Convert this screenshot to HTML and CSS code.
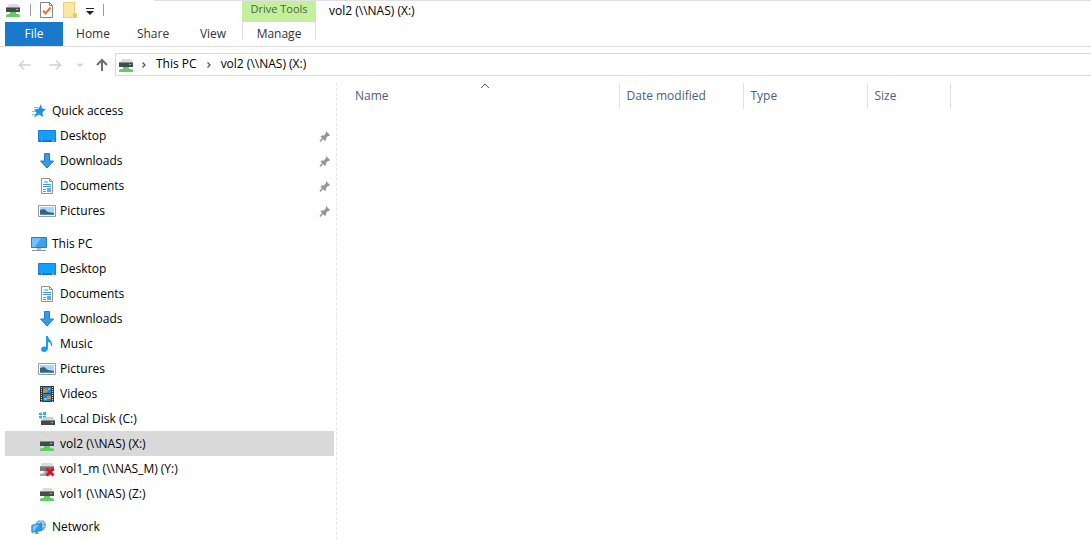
FILE: index.html
```html
<!DOCTYPE html>
<html lang="en">
<head>
  <meta charset="UTF-8">
  <title>vol2 (\\NAS) (X:)</title>
  <link rel="stylesheet" href="styles.css">
</head>
<body>
<svg class="sprite" aria-hidden="true">
  <symbol id="netdrive" viewBox="0 0 16 16">
    <path d="M4 2h9l2 4H2z" fill="#dcdcdc"/>
    <path d="M1 5h14v5H1z" fill="#454a4c"/>
    <path d="M1 5h14v1H1z" fill="#8c8f91"/>
    <path d="M11 7h2v1h-2z" fill="#5fe07a"/>
    <path d="M5 10h6v2h2l2 1v2H1v-2l2-1h2z" fill="#62cc67"/>
  </symbol>
  <symbol id="baddrive" viewBox="0 0 16 16">
    <path d="M3 2h10l2 4H1z" fill="#dcdcdc"/>
    <path d="M1 5h14v5H1z" fill="#737779"/>
    <path d="M1 5h14v1H1z" fill="#9a9c9e"/>
    <path d="M5 10h4v2h2v3H1v-2l4-1z" fill="#a9a9a9"/>
    <path d="M7.500 7.500l7 7M14.500 7.500l-7 7" stroke="#d9141e" stroke-width="3"/>
  </symbol>
  <symbol id="disk" viewBox="0 0 16 16">
    <path d="M0 2l3-.5V4H0zM4 1.300l3-.5V4H4zM0 5h3v2.500L0 7zM4 5h3v3l-3-.5z" fill="#1fb0f5"/>
    <path d="M5 6h9l2 4H2z" fill="#d2d2d2"/>
    <path d="M2 9h14v5H2z" fill="#44484a"/>
    <path d="M2 9h14v1H2z" fill="#8c8f91"/>
    <path d="M12 11h2v1h-2z" fill="#5fe07a"/>
  </symbol>
  <symbol id="star" viewBox="0 0 16 16">
    <path d="M10 1l1 4.500L15 6l-3.500 3.200L12 14l-4-2.500L3 14.500 5.500 9.500 3 6.500l4.500-.7z" fill="#1e92e6"/>
    <path d="M3 4.500h4M1 8.500h4M1 11.500h3" stroke="#72bff3"/>
  </symbol>
  <symbol id="desktop" viewBox="0 0 18 14">
    <path d="M.5 1.500h17v11H.5z" fill="#14a0fa" stroke="#1b7fd0"/>
    <path d="M1 12h16" stroke="#1560a8"/>
    <path d="M3 12h1M14 12h2" stroke="#b9e2ff"/>
  </symbol>
  <symbol id="download" viewBox="0 0 16 16">
    <path d="M5.500.5h5V8h4L8 15 1.500 8h4z" fill="#339bea" stroke="#1f7ccb"/>
  </symbol>
  <symbol id="document" viewBox="0 0 14 16">
    <path d="M1.500.5h8l3 3v12h-11z" fill="#fafafa" stroke="#8f9294"/>
    <path d="M9.500.5v3h3" fill="none" stroke="#8f9294"/>
    <path d="M4 4h4M3 6.500h8M3 8.500h8" stroke="#3a9de0"/>
    <path d="M3 11.500h3M3 13.500h3" stroke="#8f9294"/>
    <path d="M7 10h4v4H7z" fill="#6fa9cf"/>
  </symbol>
  <symbol id="picture" viewBox="0 0 18 14">
    <path d="M.5 1.500h17v11H.5z" fill="#fff" stroke="#999c9f"/>
    <path d="M2 3h14v8H2z" fill="#a7d8f5"/>
    <path d="M2 6l4-1 4 3 6 1v2H2z" fill="#35617e"/>
    <path d="M2 10h14v1H2z" fill="#4f93bf"/>
  </symbol>
  <symbol id="computer" viewBox="0 0 18 16">
    <path d="M1.500 1.500h15v10h-15z" fill="#3ba1ec" stroke="#2b7ebd"/>
    <path d="M2 2h9L5 11H2z" fill="#73c2f7"/>
    <path d="M7 12h4v2H7z" fill="#b7bcc0"/>
    <path d="M2 14.500h14" stroke="#8d959b"/>
  </symbol>
  <symbol id="music" viewBox="0 0 16 16">
    <path d="M7 0h2c0 4 5 4 4 10h-1c0-3-1-4-3-4v6c0 5-7 5-7 1.500C2 11 5 10 7 11z" fill="#189cf2"/>
  </symbol>
  <symbol id="video" viewBox="0 0 16 16">
    <path d="M1 0h14v16H1z" fill="#34383b"/>
    <path d="M2.500 1v15M13.500 1v15" stroke="#d6d6d6" stroke-dasharray="1 1"/>
    <path d="M4 1h8v6H4zM4 8h8v7H4z" fill="#2c84c8"/>
    <path d="M4 4l3-2 2 3-2 2H4zM8 10h4v3H8z" fill="#c79245"/>
    <path d="M9 2h2v2H9zM5 12h3v2H5z" fill="#65c5ee"/>
  </symbol>
  <symbol id="network" viewBox="0 0 18 18">
    <circle cx="11" cy="7" r="6" fill="#5fa8dc"/>
    <path d="M7 4q4 2 9 0M6 8h11M11 1q-4 6 0 12M11 1q5 6 0 12" fill="none" stroke="#c5e5f8"/>
    <path d="M1 7l11-2v8L1 15z" fill="#269ff0" stroke="#2579b6"/>
    <path d="M2 7.500l7-1.500-6 8H2z" fill="#79c8fb"/>
    <path d="M5 15l3-1v2l2 1H4z" fill="#8b959c"/>
  </symbol>
  <symbol id="pin" viewBox="0 0 12 12">
    <path d="M7 1l4 4-1 1H9L7 8v2L6 11 1.500 6.500l1-1H5L7 3z" fill="#90979d"/>
    <path d="M4.500 7.500L1 11.500" stroke="#90979d" stroke-width="1.500"/>
  </symbol>
  <symbol id="chevron" viewBox="0 0 8 8">
    <path d="M2.500 1.500L5 4 2.500 6.500" fill="none" stroke="#555" stroke-width="1.300"/>
  </symbol>
</svg>

<header>
  <div class="titlebar">
    <div class="quickbar">
      <svg class="icon"><use href="#netdrive"/></svg>
      <span class="bar"></span>
      <button type="button" aria-label="Properties">
        <svg width="14" height="16" viewBox="0 0 14 16"><path d="M.5.5h9l3 3v12H.5z" fill="#fff" stroke="#858585"/><path d="M9.500.5v3h3" fill="none" stroke="#858585"/><path d="M3 8.500l2.500 3 5-6" fill="none" stroke="#ee7124" stroke-width="2"/></svg>
      </button>
      <button type="button" aria-label="New folder">
        <svg width="14" height="16" viewBox="0 0 14 16"><path d="M0 0h12v11h1v5H0z" fill="#f3cf78"/><path d="M1 1h10v14H1z" fill="#fbe6a2"/><path d="M10 11h4v5h-4z" fill="#f3c57a"/></svg>
      </button>
      <button type="button" class="more" aria-label="Customize">
        <svg width="8" height="8" viewBox="0 0 8 8"><path d="M0 1.500h8" stroke="#222"/><path d="M0 4h8L4 8z" fill="#222"/></svg>
      </button>
      <span class="bar"></span>
    </div>
    <div class="tool-title">Drive Tools</div>
    <div class="title">vol2 (\\NAS) (X:)</div>
  </div>
  <nav class="tabs">
    <a href="#" class="file">File</a>
    <a href="#">Home</a>
    <a href="#">Share</a>
    <a href="#">View</a>
    <a href="#" class="manage">Manage</a>
  </nav>
  <div class="address-row">
    <div class="history">
      <button type="button" aria-label="Back"><svg width="14" height="12" viewBox="0 0 14 12"><path d="M13 6H1.500M6 1.500L1.500 6 6 10.500" fill="none" stroke="#d2d2d2" stroke-width="1.500"/></svg></button>
      <button type="button" aria-label="Forward"><svg width="14" height="12" viewBox="0 0 14 12"><path d="M1 6h11.500M8 1.500L12.500 6 8 10.500" fill="none" stroke="#d2d2d2" stroke-width="1.500"/></svg></button>
      <button type="button" class="recent" aria-label="Recent locations"><svg width="8" height="6" viewBox="0 0 8 6"><path d="M1.500 1.500L4 4l2.500-2.500" fill="none" stroke="#c8c8c8" stroke-width="1.300"/></svg></button>
      <button type="button" aria-label="Up"><svg width="12" height="14" viewBox="0 0 12 14"><path d="M6 13V2M1 7l5-5 5 5" fill="none" stroke="#6e6e6e" stroke-width="2"/></svg></button>
    </div>
    <div class="address">
      <svg class="icon"><use href="#netdrive"/></svg>
      <svg class="sep"><use href="#chevron"/></svg>
      <a href="#">This PC</a>
      <svg class="sep"><use href="#chevron"/></svg>
      <a href="#">vol2 (\\NAS) (X:)</a>
    </div>
  </div>
</header>

<main>
  <aside>
    <ul class="tree">
      <li>
        <a href="#"><svg class="icon"><use href="#star"/></svg>Quick access</a>
        <ul>
          <li><a href="#"><svg class="icon"><use href="#desktop"/></svg>Desktop<svg class="pin"><use href="#pin"/></svg></a></li>
          <li><a href="#"><svg class="icon"><use href="#download"/></svg>Downloads<svg class="pin"><use href="#pin"/></svg></a></li>
          <li><a href="#"><svg class="icon"><use href="#document"/></svg>Documents<svg class="pin"><use href="#pin"/></svg></a></li>
          <li><a href="#"><svg class="icon"><use href="#picture"/></svg>Pictures<svg class="pin"><use href="#pin"/></svg></a></li>
        </ul>
      </li>
      <li>
        <a href="#"><svg class="icon"><use href="#computer"/></svg>This PC</a>
        <ul>
          <li><a href="#"><svg class="icon"><use href="#desktop"/></svg>Desktop</a></li>
          <li><a href="#"><svg class="icon"><use href="#document"/></svg>Documents</a></li>
          <li><a href="#"><svg class="icon"><use href="#download"/></svg>Downloads</a></li>
          <li><a href="#"><svg class="icon"><use href="#music"/></svg>Music</a></li>
          <li><a href="#"><svg class="icon"><use href="#picture"/></svg>Pictures</a></li>
          <li><a href="#"><svg class="icon"><use href="#video"/></svg>Videos</a></li>
          <li><a href="#"><svg class="icon"><use href="#disk"/></svg>Local Disk (C:)</a></li>
          <li><a href="#" class="selected"><svg class="icon"><use href="#netdrive"/></svg>vol2 (\\NAS) (X:)</a></li>
          <li><a href="#"><svg class="icon"><use href="#baddrive"/></svg>vol1_m (\\NAS_M) (Y:)</a></li>
          <li><a href="#"><svg class="icon"><use href="#netdrive"/></svg>vol1 (\\NAS) (Z:)</a></li>
        </ul>
      </li>
      <li>
        <a href="#"><svg class="icon"><use href="#network"/></svg>Network</a>
      </li>
    </ul>
  </aside>
  <section class="files">
    <table>
      <thead>
        <tr>
          <th class="name">Name<svg class="sort" viewBox="0 0 10 6"><path d="M1 5l4-4 4 4" fill="none" stroke="#555"/></svg></th>
          <th>Date modified</th>
          <th>Type</th>
          <th class="size">Size</th>
        </tr>
      </thead>
    </table>
  </section>
</main>
</body>
</html>
```
FILE: styles.css
```css
*{
  box-sizing: border-box;
}
body{
  font-family: "Open Sans", "Noto Sans", sans-serif;
  font-size: 12px;
  line-height: 16px;
  color: #000;
  background: #fff;
  margin: 0;
  min-height: 100vh;
  display: flex;
  flex-direction: column;
}
a{
  color: inherit;
  text-decoration: none;
}
button{
  display: flex;
  padding: 0;
  border: 0;
  background: none;
}
svg{
  display: block;
  flex: none;
}
.sprite{
  position: absolute;
  width: 0;
  height: 0;
}
.icon{
  width: 16px;
  height: 16px;
}

.titlebar{
  display: flex;
  height: 22px;
  padding-left: 5px;
  background: linear-gradient(#e0e0e0, #e0e0e0) 154px 0 / 100% 1px no-repeat;
}
.quickbar{
  display: flex;
  align-items: center;
  gap: 9px;
  width: 237px;
  height: 20px;
}
.quickbar .bar{
  width: 1px;
  height: 12px;
  background: #999;
}
.more{
  margin: 2px 0 0;
}
.tool-title{
  width: 74px;
  margin-top: 1px;
  font-size: 11px;
  text-align: center;
  background: #c3f09d;
  color: #4c6540;
}
.title{
  flex: 1;
  padding: 3px 13px;
}

.tabs{
  display: flex;
  height: 25px;
  padding-left: 5px;
  border-bottom: 1px solid #dedede;
  color: #333;
}
.tabs a{
  width: 60px;
  padding-top: 4px;
  text-align: center;
}
.tabs a.file{
  width: 58px;
  background: #1979ca;
  color: #fff;
}
.tabs a.manage{
  width: 74px;
  height: 18px;
  margin-left: -1px;
  border: solid #dedede;
  border-width: 0 1px;
}

.address-row{
  display: flex;
  padding: 6px 0 2px 18px;
}
.history{
  display: flex;
  align-items: center;
  gap: 16px;
  width: 97px;
}
.history .recent{
  margin: 0 -4px 0 -2px;
}
.address{
  display: flex;
  flex: 1;
  align-items: center;
  height: 23px;
  padding-left: 2px;
  border: 1px solid #d9d9d9;
  border-right: 0;
}
.address .icon{
  margin-right: -2px;
}
.address a{
  padding-bottom: 2px;
}
.sep{
  width: 8px;
  height: 8px;
  margin: 0 8px;
}

main{
  display: flex;
  flex: 1;
  padding: 5px 0 0 5px;
}
aside{
  width: 332px;
  padding: 15px 2px 0 0;
  border-right: 1px dashed #e6e6e6;
}
.tree, .tree ul{
  list-style: none;
  margin: 0;
  padding: 0;
}
.tree > li + li{
  margin-top: 8px;
}
.tree a{
  display: flex;
  align-items: center;
  gap: 4px;
  height: 25px;
  padding-left: 25px;
}
.tree .icon{
  width: 18px;
}
.tree ul a{
  padding-left: 33px;
}
.tree a.selected{
  background: #d9d9d9;
}
.pin{
  width: 12px;
  height: 12px;
  margin: 0 3px 0 auto;
}

.files{
  flex: 1;
}
table{
  margin-left: 8px;
  border-collapse: collapse;
}
th{
  width: 124px;
  height: 26px;
  padding: 0 7px;
  text-align: left;
  font-weight: normal;
  color: #4c607a;
  border-right: 1px solid #e2e2e2;
}
th.name{
  width: 274px;
  padding-left: 10px;
  position: relative;
}
th.size{
  width: 83px;
}
.sort{
  position: absolute;
  top: 0;
  right: 129px;
  width: 10px;
  height: 6px;
}
```
